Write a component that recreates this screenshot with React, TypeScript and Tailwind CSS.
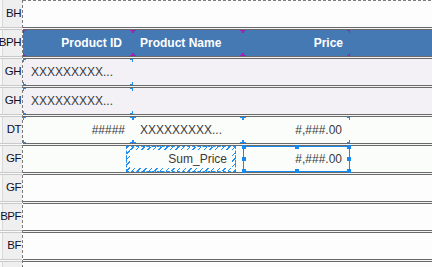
import React from 'react';

const FONT = "font-['Liberation_Sans',Arial,sans-serif]";

// small L-shaped markers at the four corners of a report cell
function Corners({ c }: { c: string }) {
    return (
        <>
            <span className={`absolute left-0 top-0 w-[3px] h-[3px] border-l border-t ${c}`} />
            <span className={`absolute right-0 top-0 w-[3px] h-[3px] border-r border-t ${c}`} />
            <span className={`absolute left-0 bottom-0 w-[3px] h-[3px] border-l border-b ${c}`} />
            <span className={`absolute right-0 bottom-0 w-[3px] h-[3px] border-r border-b ${c}`} />
        </>
    );
}

function Handle({ pos }: { pos: string }) {
    return <span className={`absolute w-[4px] h-[4px] bg-[#1589ee] ${pos}`} />;
}

const labels = ['BH', 'BPH', 'GH', 'GH', 'DT', 'GF', 'GF', 'BPF', 'BF'];

function GutterSep() {
    return <div className="h-[3px] border-y border-[#c9c9c9] bg-[#f9f9f9]" />;
}

function Sep() {
    return <div className="h-[3px] border-y border-[#6a6a6a] bg-[#f4f4f4]" />;
}

const PURPLE = 'border-[#a21fb6]';
const BLUE = 'border-[#1e8ef2]';

function HeaderBand() {
    return (
        <div className="h-[26px] bg-[#4479b4] flex text-white font-bold text-[12px]">
            <div className="relative w-[110px] flex items-center justify-end pr-[11px]">
                <Corners c={PURPLE} />
                Product ID
            </div>
            <div className="relative w-[110px] flex items-center pl-[7px]">
                <Corners c={PURPLE} />
                Product Name
            </div>
            <div className="relative w-[107px] flex items-center justify-end pr-[7px]">
                <Corners c={PURPLE} />
                Price
            </div>
        </div>
    );
}

function GroupHeaderBand() {
    return (
        <div className="h-[26px] bg-[#f3f1f5] flex text-[12px] text-[#3a3a3a]">
            <div className="relative w-[110px] flex items-center pl-[8px]">
                <Corners c={BLUE} />
                XXXXXXXXX...
            </div>
        </div>
    );
}

function DetailBand() {
    return (
        <div className="h-[26px] bg-[#fbfdfb] flex text-[12px] text-[#3a3a3a]">
            <div className="relative w-[110px] flex items-center justify-end pr-[8px]">
                <Corners c={BLUE} />
                #####
            </div>
            <div className="relative w-[110px] flex items-center pl-[7px]">
                <Corners c={BLUE} />
                XXXXXXXXX...
            </div>
            <div className="relative w-[107px] flex items-center justify-end pr-[8px]">
                <Corners c={BLUE} />
                #,###.00
            </div>
        </div>
    );
}

function GroupFooterBand() {
    return (
        <div className="h-[26px] bg-[#fbfdfb] flex text-[12px] text-[#3a3a3a] pl-[103px]">
            <div className="w-[110px] h-full border border-dashed border-[#1e8ef2] p-[3px] bg-[repeating-linear-gradient(135deg,#1e8ef2_0px,#1e8ef2_1px,transparent_1px,transparent_4px)]">
                <div className="h-full bg-[#fbfdfb] flex items-center justify-end pr-[5px]">Sum_Price</div>
            </div>
            <div className="relative ml-[7px] w-[107px] h-full border border-[#1589ee] flex items-center justify-end pr-[7px]">
                <Handle pos="-left-[2px] -top-[2px]" />
                <Handle pos="left-[51px] -top-[2px]" />
                <Handle pos="-right-[2px] -top-[2px]" />
                <Handle pos="-left-[2px] top-[10px]" />
                <Handle pos="-right-[2px] top-[10px]" />
                <Handle pos="-left-[2px] -bottom-[2px]" />
                <Handle pos="left-[51px] -bottom-[2px]" />
                <Handle pos="-right-[2px] -bottom-[2px]" />
                #,###.00
            </div>
        </div>
    );
}

function EmptyBand() {
    return <div className="h-[26px] bg-[#fcfdfc]" />;
}

export default function App() {
    const bands = [
        <EmptyBand key="bh" />,
        <HeaderBand key="bph" />,
        <GroupHeaderBand key="gh1" />,
        <GroupHeaderBand key="gh2" />,
        <DetailBand key="dt" />,
        <GroupFooterBand key="gf1" />,
        <EmptyBand key="gf2" />,
        <EmptyBand key="bpf" />,
        <EmptyBand key="bf" />,
    ];

    return (
        <div className={`flex w-[432px] h-[267px] overflow-hidden bg-[#fcfdfc] ${FONT}`}>
            {/* band labels */}
            <div className="w-[22px] shrink-0 flex flex-col bg-[#efefef] shadow-[inset_2px_0_0_#f7f7f7,inset_3px_0_0_#d9d9d9]">
                <div className="h-px" />
                {labels.map((l, i) => (
                    <React.Fragment key={i}>
                        <div className="h-[26px] flex items-center justify-end text-[11.5px] tracking-[-0.5px] text-[#10102e] pr-[1px]">
                            {l}
                        </div>
                        <GutterSep />
                    </React.Fragment>
                ))}
            </div>
            <div className="w-px shrink-0 h-full bg-[repeating-linear-gradient(to_bottom,#7c7c7c_0px,#7c7c7c_3px,transparent_3px,transparent_5px)]" />
            <div className="flex-1 flex flex-col">
                <div className="h-px shrink-0 bg-[repeating-linear-gradient(to_right,#7c7c7c_0px,#7c7c7c_3px,transparent_3px,transparent_5px)]" />
                {bands.map((b, i) => (
                    <React.Fragment key={i}>
                        {b}
                        <Sep />
                    </React.Fragment>
                ))}
            </div>
        </div>
    );
}
